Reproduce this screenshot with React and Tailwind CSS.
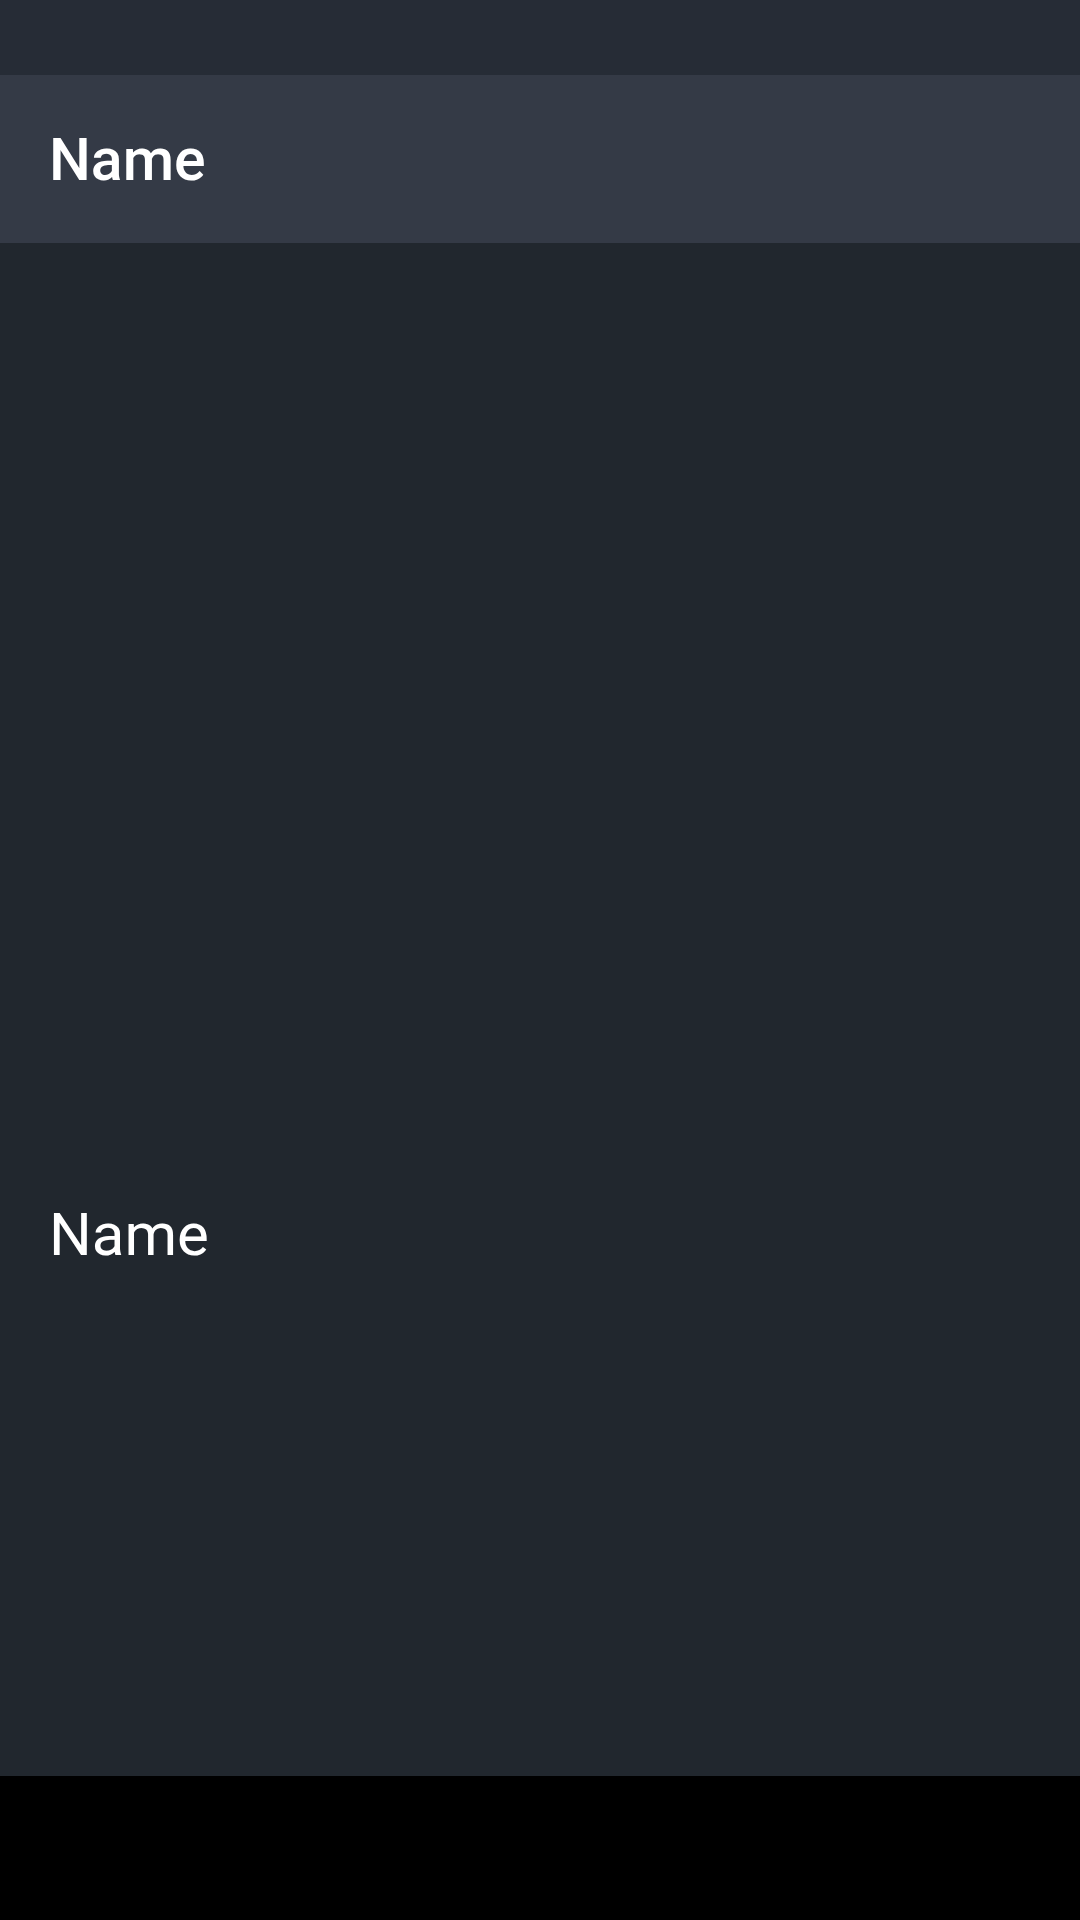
import React from 'react'

export default function App() {
    return (
        <div className="w-[1080px] h-[1920px] flex flex-col bg-black" style={{ fontFamily: 'Roboto, "Liberation Sans", sans-serif' }}>
            <div className="h-[75px] bg-[#262c36]"></div>
            <div className="h-[168px] bg-[#343a46] flex items-center px-[49px]">
                <h1 className="text-[59px] font-medium text-white leading-none">Name</h1>
            </div>
            <div className="h-[1533px] bg-[#21272e] flex flex-col px-[49px]">
                <p className="mt-[962px] text-[60px] text-white leading-none">Name</p>
            </div>
        </div>
    )
}
